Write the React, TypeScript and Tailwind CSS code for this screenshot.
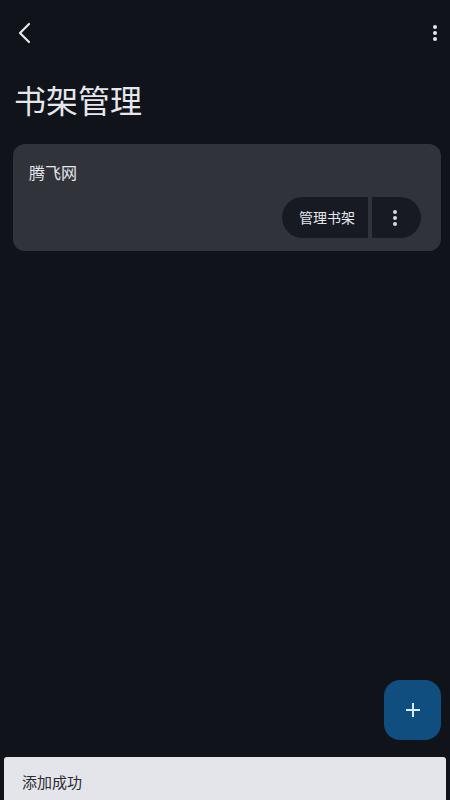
import React from "react";

const font = { fontFamily: '"Noto Sans", "Noto Sans CJK SC", sans-serif' };

const Dots = ({ className = "" }: { className?: string }) => (
  <svg width="6" height="18" viewBox="0 0 6 18" className={className}>
    <circle cx="3" cy="3" r="2" fill="currentColor" />
    <circle cx="3" cy="9" r="2" fill="currentColor" />
    <circle cx="3" cy="15" r="2" fill="currentColor" />
  </svg>
);

export default function App() {
  return (
    <div
      className="relative w-[450px] h-[800px] overflow-hidden bg-[#10131a] text-[#e3e4ea]"
      style={font}
    >
      {/* top bar */}
      <div className="flex items-center justify-between h-[66px] pl-[16px] pr-[12px]">
        <svg width="18" height="22" viewBox="0 0 18 22" className="text-[#e6e7ec]">
          <path d="M13 2 L4 11 L13 20" fill="none" stroke="currentColor" strokeWidth="2.2" strokeLinecap="round" strokeLinejoin="round" />
        </svg>
        <Dots className="text-[#e6e7ec]" />
      </div>

      <div className="px-[14px] pt-[7px] text-[32px] leading-[56px] text-[#e6e7ec]">书架管理</div>

      <div className="pl-[13px] pr-[9px] mt-[15px]">
        <div className="rounded-[12px] bg-[#31333b] pt-[14px] pb-[13px] px-[16px]">
          <div className="text-[16px] leading-[30px] text-[#e6e7ec]">腾飞网</div>
          <div className="flex justify-end gap-[4px] mt-[9px] pr-[4px]">
            <button className="h-[41px] pl-[17px] pr-[13px] rounded-l-full rounded-r-[5px] bg-[#171a22] text-[14px] text-[#e6e7ec]">
              管理书架
            </button>
            <button className="h-[41px] w-[49px] flex items-center justify-center pr-[4px] rounded-r-full rounded-l-[5px] bg-[#171a22] text-[#d6d8de]">
              <Dots />
            </button>
          </div>
        </div>
      </div>

      {/* FAB */}
      <button className="absolute left-[384px] top-[680px] w-[57px] h-[60px] rounded-[16px] bg-[#0f4e7f] flex items-center justify-center text-[#d6ecff]">
        <svg width="16" height="16" viewBox="0 0 16 16">
          <path d="M8 1 V15 M1 8 H15" stroke="currentColor" strokeWidth="2" />
        </svg>
      </button>

      {/* toast */}
      <div className="absolute left-[4px] right-[4px] top-[757px] h-[50px] rounded-t-[3px] bg-[#e4e5ea] text-[#2a2b30] text-[15px] pl-[18px] pt-[14px]">
        添加成功
      </div>
    </div>
  );
}
